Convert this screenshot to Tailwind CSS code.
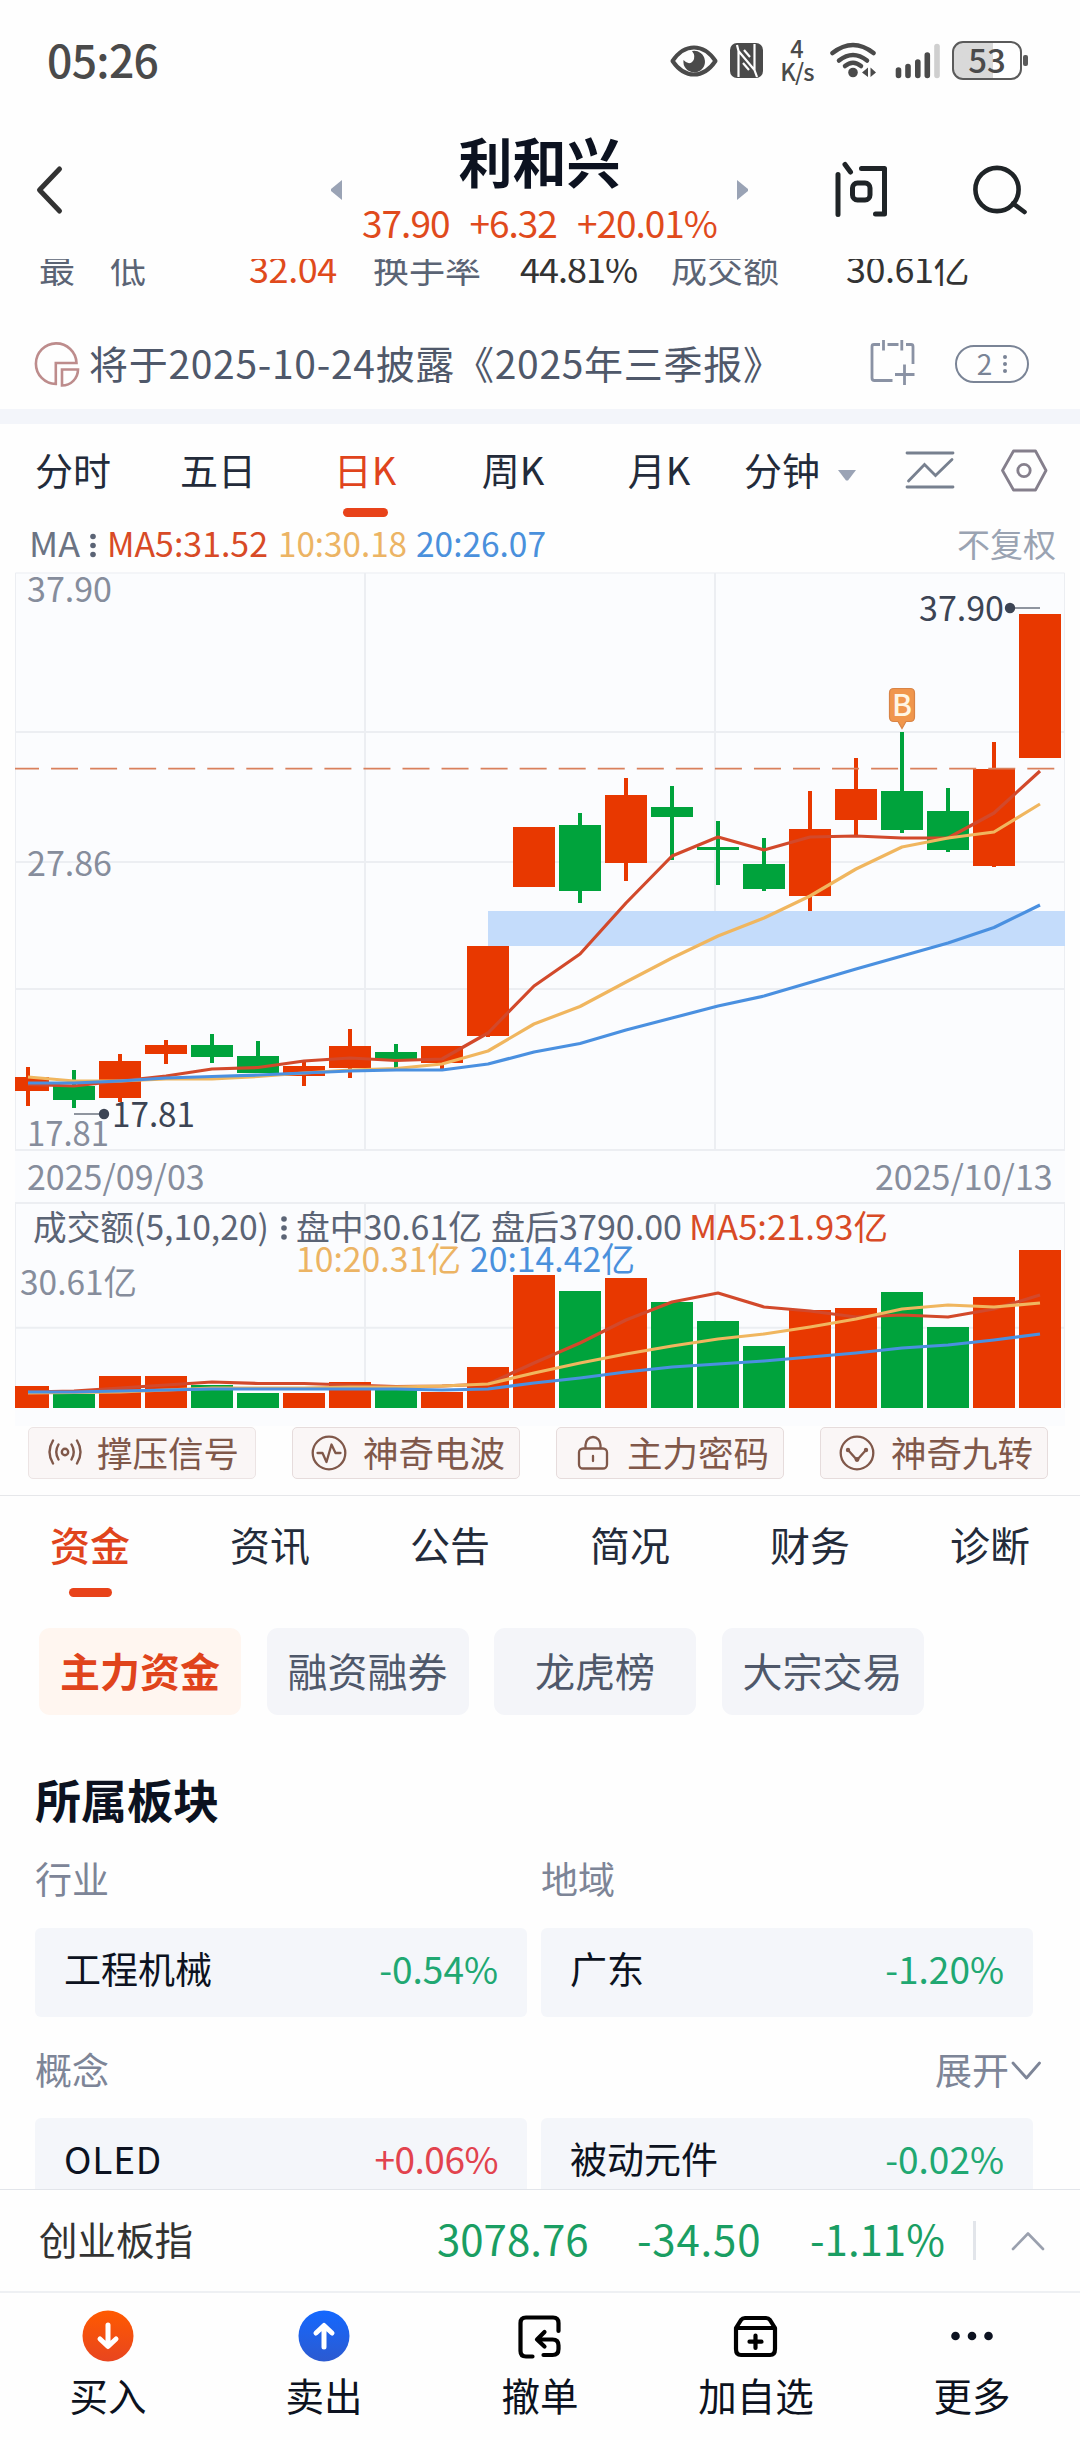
<!DOCTYPE html>
<html lang="zh-CN">
<head>
  <meta charset="UTF-8">
  <meta name="viewport" content="width=device-width, initial-scale=1.0">
  <title>利和兴 37.90 +20.01%</title>
  <script src="https://cdn.jsdelivr.net/npm/@tailwindcss/browser@4"></script>
</head>
<body class="w-[1080px] h-[2440px] overflow-hidden flex flex-col bg-[#fefefe] text-[#232b3a] font-['Noto_Sans_CJK_SC','Roboto',sans-serif]">

  <!-- Status bar -->
  <div class="h-[100px] shrink-0 flex items-start text-[#4a4a4a]">
    <span class="ml-[47px] mt-[29px] w-[623px] text-[44.500px] leading-[60px] font-medium tracking-[-0.700px]">05:26</span>
    <svg class="mt-[42px]" width="48" height="38" viewBox="670 42 48 38" fill="none">
      <path d="M672.500 61 C680 50 687 47.500 694 47.500 C701 47.500 708 50 715.500 61 C708 72 701 74.500 694 74.500 C687 74.500 680 72 672.500 61 Z" stroke="#4a4a4a" stroke-width="4" stroke-linejoin="round"/>
      <path d="M692 51 A10.800 10.800 0 1 1 683.500 60 Q689 66 693 61 Q696 56 692 51 Z" fill="#4a4a4a"/>
    </svg>
    <svg class="ml-[12px] mt-[43px]" width="33" height="35" viewBox="0 0 33 35">
      <rect width="33" height="35" rx="7" fill="#4a4a4a"/>
      <path d="M8.500 34 V8 L24.500 27 M8.500 8 L7 2 M24.500 1 V27 L27 34 M13 20 L19 27 M14 7 L20 14" fill="none" stroke="#fefefe" stroke-width="2.200"/>
    </svg>
    <div class="ml-[12px] mt-[37px] w-[44px] flex flex-col items-center text-[23.500px] leading-[23px] font-medium">
      <span>4</span>
      <span class="tracking-[-0.800px]">K/s</span>
    </div>
    <svg class="ml-[10px] mt-[40px]" width="48" height="40" viewBox="828 41 48 40" fill="none" stroke="#4a4a4a" stroke-width="4.500" stroke-linecap="round">
      <path d="M831.500 54 Q852 38 872.500 54"/>
      <path d="M838 61.500 Q852 50.500 866 61.500"/>
      <path d="M844 67 Q852 60.500 860 67"/>
      <circle cx="852" cy="73.500" r="4.800" fill="#4a4a4a" stroke="none"/>
      <path d="M867 68.500 V78 L861 73.500 Z M869.500 68.500 V78 L875 73.500 Z" fill="#4a4a4a" stroke="none"/>
    </svg>
    <svg class="ml-[18px] mt-[42px]" width="46" height="37" viewBox="894 42 46 37" stroke="#4a4a4a" stroke-width="5.600" stroke-linecap="round">
      <path d="M897.500 70 V75.500 M907 66.500 V75.500 M916.800 62 V75.500 M926.300 55 V75.500"/>
      <path d="M936 46.500 V75.500" stroke="#cfcfcf"/>
    </svg>
    <div class="relative ml-[11px] mt-[41px] w-[70px] h-[39px] rounded-[11px] border-[2.500px] border-[#5a5a5a] bg-linear-to-r from-[#d9d9d9] from-59% to-[#fefefe] to-59% flex items-center justify-center">
      <span class="text-[33px] leading-[34px] font-medium -mt-[4px]">53</span>
      <span class="absolute -right-[8px] top-[12px] w-[5px] h-[11px] rounded-[2px] bg-[#5a5a5a]"></span>
    </div>
  </div>

  <!-- Header -->
  <header class="h-[158px] shrink-0 pt-[22px] pl-[35px] flex items-center">
    <svg width="30" height="50" viewBox="0 0 30 50" fill="none" stroke="#333" stroke-width="5" stroke-linecap="round" stroke-linejoin="round">
      <path d="M24.500 4 L4.500 25 L24.500 46"/>
    </svg>
    <svg class="ml-[266px]" width="11" height="20" viewBox="0 0 11 20"><path d="M11 0 V20 L0 11 V9 Z" fill="#9aa3b5"/></svg>
    <div class="w-[395px] self-start mt-[12px] flex flex-col items-center">
      <h1 class="text-[54px] leading-[54px] font-bold text-[#0c1220]">利和兴</h1>
      <div class="mt-[14px] flex gap-[20px] text-[37px] leading-[40px] tracking-[-1px] text-[#e04a1c]">
        <span>37.90</span><span>+6.32</span><span>+20.01%</span>
      </div>
    </div>
    <svg width="11" height="20" viewBox="0 0 11 20"><path d="M0 0 V20 L11 11 V9 Z" fill="#9aa3b5"/></svg>
    <svg class="ml-[85px]" width="56" height="60" viewBox="833 160 56 60" fill="none" stroke="#1f2427" stroke-width="5" stroke-linecap="round" stroke-linejoin="round">
      <path d="M838 174.500 V214.500 M845 164.500 L850.500 172 M861.500 168.500 H884.500 V214 H875.500"/>
      <rect x="852.500" y="183" width="17.500" height="17" rx="5"/>
    </svg>
    <svg class="ml-[82px]" width="60" height="60" viewBox="971 160 60 60" fill="none" stroke="#1f2427" stroke-width="4.600" stroke-linecap="round">
      <circle cx="997" cy="189.500" r="21.600"/>
      <path d="M1013 203.500 L1024.500 212"/>
    </svg>
  </header>

  <!-- Quote row, scrolled under the header -->
  <div class="h-[57px] mt-px shrink-0 overflow-hidden">
    <div class="-mt-[18px] flex text-[36px] leading-[52px] text-[#5b6475]">
      <span class="ml-[39px] w-[210px] whitespace-pre tracking-[-0.100px]">最<span class="inline-block w-[35px]"></span>低</span>
      <span class="w-[124px] text-[#e04a1c] tracking-[-0.400px]">32.04</span>
      <span class="w-[147px]">换手率</span>
      <span class="w-[151px] text-[#333] tracking-[-1px]">44.81%</span>
      <span class="w-[175px]">成交额</span>
      <span class="text-[#333] tracking-[-0.500px]">30.61亿</span>
    </div>
  </div>

  <!-- Report notice -->
  <div class="h-[93px] shrink-0 pl-[34px] flex items-center">
    <svg class="mt-1" width="46" height="48" viewBox="34 341 46 48" fill="none" stroke="#bd8c8c" stroke-width="2.600">
      <path d="M55.800 384 A20.300 20.300 0 1 1 76.500 363 H55.800 Z"/>
      <path d="M62 369.500 H78 A16 16 0 0 1 62 385.500 Z"/>
    </svg>
    <span class="ml-[9px] w-[780px] text-[39px] leading-[50px] tracking-[0.700px] -mt-[2px] text-[#4f586a]">将于2025-10-24披露《2025年三季报》</span>
    <svg class="mt-[3px]" width="48" height="50" viewBox="869 340 48 50" fill="none" stroke="#8a92a4" stroke-width="2.800">
      <path d="M880 345.500 H874 Q872 345.500 872 347.500 V379 Q872 381.500 874.500 381.500 H892.500 M887.500 345.500 H898.500 M906 345.500 H911 Q913 345.500 913 347.500 V365 M883.500 341 V351.500 M901.800 341 V351.500 M904.500 365.500 V386 M895 375.500 H914.500"/>
    </svg>
    <div class="ml-[38px] mt-[2px] w-[74px] h-[38px] rounded-full border-[2.500px] border-[#7a8496] flex items-center justify-center gap-[11px] text-[#7a8496]">
      <span class="text-[28px] leading-[30px] -mt-[2px]">2</span>
      <span class="flex flex-col gap-[3px]">
        <i class="size-[4px] rounded-full bg-[#7a8496]"></i><i class="size-[4px] rounded-full bg-[#7a8496]"></i><i class="size-[4px] rounded-full bg-[#7a8496]"></i>
      </span>
    </div>
  </div>

  <div class="h-[15px] shrink-0 bg-[#f3f5fa]"></div>

  <!-- Period tabs -->
  <nav class="h-[98px] shrink-0 pt-[20px] flex items-start text-[38px] leading-[50px]">
    <span class="w-[146px] text-center">分时</span>
    <span class="w-[144px] text-center">五日</span>
    <span class="w-[150px] flex flex-col items-center text-[#e0441c]">日K<i class="mt-[14px] w-[45px] h-[9px] rounded-full bg-[#e8431a]"></i></span>
    <span class="w-[146px] text-center">周K</span>
    <span class="w-[146px] text-center">月K</span>
    <span class="ml-[12px]">分钟</span>
    <svg class="ml-[17px] mt-[25px]" width="20" height="13" viewBox="0 0 20 13"><path d="M1 1 H19 L11 11.500 H9 Z" fill="#9aa3b5"/></svg>
    <svg class="ml-[48px] mt-[6px]" width="50" height="40" viewBox="906 450 50 40" fill="none" stroke="#77808f" stroke-width="2.800" stroke-linecap="round">
      <path d="M908 453 H954 M908 487 H954 M909.500 481 L925.500 464.500 L936.500 475.500 L953 459.500"/>
    </svg>
    <svg class="ml-[45px] mt-[4px]" width="50" height="46" viewBox="1000 448 50 46" fill="none" stroke="#857f8c" stroke-width="2.800" stroke-linejoin="round">
      <path d="M1013.500 451 H1035.500 L1046 470.500 L1035.500 490 H1013.500 L1002.500 470.500 Z"/>
      <circle cx="1024" cy="470.500" r="6.200"/>
    </svg>
  </nav>

  <!-- K line + turnover charts -->
  <svg class="shrink-0" width="1080" height="904" viewBox="0 522 1080 904" font-size="34">
    <g>
      <text x="29" y="557" fill="#6b7383" textLength="51" lengthAdjust="spacingAndGlyphs">MA</text>
      <g fill="#5b6475"><circle cx="93" cy="536.500" r="2.800"/><circle cx="93" cy="545.500" r="2.800"/><circle cx="93" cy="554.500" r="2.800"/></g>
      <text x="107" y="557" fill="#d84a26" textLength="161" lengthAdjust="spacingAndGlyphs">MA5:31.52</text>
      <text x="278" y="557" fill="#ecb464" textLength="129" lengthAdjust="spacingAndGlyphs">10:30.18</text>
      <text x="416" y="557" fill="#4a90dc" textLength="130" lengthAdjust="spacingAndGlyphs">20:26.07</text>
      <text x="957" y="557" font-size="33" fill="#9aa3b2">不复权</text>
    </g>

    <rect x="15" y="572" width="1050" height="854" fill="#fbfcfe"/>
    <g fill="none" stroke="#eceef2" stroke-width="2">
      <path d="M15.500 1150 V573 H1064.500 V1150" stroke-width="1"/>
      <path d="M15 732 H1065 M15 862 H1065 M15 989 H1065 M15 1150 H1065 M365 573 V1150 M715 573 V1150"/>
      <path d="M15.500 1408 V1203 M1064.500 1408 V1203" stroke-width="1"/>
      <path d="M15 1203 H1065 M15 1327.700 H1065 M365 1203 V1408 M715 1203 V1408"/>
    </g>
    <rect x="488" y="911" width="577" height="35" fill="#c4dcfb"/>

    <g fill="#868d9c">
      <text x="27" y="601.500" textLength="85" lengthAdjust="spacingAndGlyphs">37.90</text>
      <text x="27" y="876" textLength="85" lengthAdjust="spacingAndGlyphs">27.86</text>
      <text x="27" y="1146" textLength="82" lengthAdjust="spacingAndGlyphs">17.81</text>
      <text x="27" y="1190">2025/09/03</text>
      <text x="875" y="1190">2025/10/13</text>
      <text x="20" y="1295" textLength="117" lengthAdjust="spacingAndGlyphs">30.61亿</text>
    </g>

    <g id="candles"></g>
    <path d="M12 768.700 H1055" stroke="#d9805c" stroke-width="1.800" stroke-dasharray="27 12.050" clip-path="url(#plot)"/>
    <clipPath id="plot"><rect x="15" y="572" width="1050" height="854"/></clipPath>
    <g id="lines" fill="none" stroke-width="3.200" stroke-linejoin="round"></g>

    <!-- High / low callouts -->
    <g fill="#3c4454">
      <path d="M1010 608 H1040 M74 1114 H104" stroke="#8f959f" stroke-width="1.800"/>
      <circle cx="1010" cy="608" r="5.200"/>
      <circle cx="104" cy="1114" r="5.200"/>
      <text x="919" y="621" textLength="85" lengthAdjust="spacingAndGlyphs">37.90</text>
      <text x="112" y="1127" textLength="83" lengthAdjust="spacingAndGlyphs">17.81</text>
    </g>

    <!-- Buy marker -->
    <path d="M894 688.500 H910 Q914.500 688.500 914.500 693 V717 Q914.500 721.500 910 721.500 H906 L902 728.500 L898 721.500 H894 Q889.500 721.500 889.500 717 V693 Q889.500 688.500 894 688.500 Z" fill="#f0964c" stroke="#d98446" stroke-width="1.200"/>
    <text x="902" y="716" text-anchor="middle" font-size="30" font-weight="500" fill="#fff6e4">B</text>

    <g fill="#5b6475">
      <text x="33" y="1240" textLength="236" lengthAdjust="spacingAndGlyphs">成交额(5,10,20)</text>
      <circle cx="284" cy="1219" r="2.800"/><circle cx="284" cy="1228" r="2.800"/><circle cx="284" cy="1237" r="2.800"/>
      <text x="296" y="1240" textLength="186" lengthAdjust="spacingAndGlyphs">盘中30.61亿</text>
      <text x="491" y="1240" textLength="191" lengthAdjust="spacingAndGlyphs">盘后3790.00</text>
      <text x="689" y="1240" fill="#d84a26" textLength="199" lengthAdjust="spacingAndGlyphs">MA5:21.93亿</text>
      <text x="296" y="1272" fill="#ecb464" textLength="165" lengthAdjust="spacingAndGlyphs">10:20.31亿</text>
      <text x="470" y="1272" fill="#4a90dc" textLength="165" lengthAdjust="spacingAndGlyphs">20:14.42亿</text>
    </g>
  </svg>

  <!-- Signal buttons -->
  <div class="h-[69px] shrink-0 pt-px pl-[28px] flex gap-[36px] text-[35.500px] leading-[44px] text-[#80584a]">
    <div class="w-[228px] h-[52px] rounded-[5px] border-[1.500px] border-[#ece4e4] bg-[#faf6f6] flex items-center pl-[18px]">
      <svg width="36" height="34" viewBox="0 0 36 34" fill="none" stroke="#80584a" stroke-width="2.400" stroke-linecap="round">
        <circle cx="18" cy="16" r="3.200"/>
        <path d="M11.500 8.500 Q7 16 11.500 23.500 M24.500 8.500 Q29 16 24.500 23.500 M6 4.500 Q-1 16 6 27.500 M30 4.500 Q37 16 30 27.500"/>
      </svg>
      <span class="ml-[14px] -mt-[2px]">撑压信号</span>
    </div>
    <div class="w-[228px] h-[52px] rounded-[5px] border-[1.500px] border-[#e6dcdc] bg-[#faf6f6] flex items-center pl-[18px]">
      <svg width="36" height="36" viewBox="0 0 36 36" fill="none" stroke="#80584a" stroke-width="2.300" stroke-linecap="round" stroke-linejoin="round">
        <circle cx="18" cy="18" r="16.300"/>
        <path d="M6.500 18 H11.500 L15.500 27 L20.500 9.500 L24.500 18 H29.500"/>
      </svg>
      <span class="ml-[16px] -mt-[2px]">神奇电波</span>
    </div>
    <div class="w-[228px] h-[52px] rounded-[5px] border-[1.500px] border-[#e6dcdc] bg-[#faf6f6] flex items-center pl-[18px]">
      <svg width="36" height="36" viewBox="0 0 36 36" fill="none" stroke="#80584a" stroke-width="2.300" stroke-linecap="round">
        <rect x="4" y="13.500" width="28" height="20" rx="4"/>
        <path d="M10.500 13 V10 A7.500 8 0 0 1 25.500 10 V13 M18 21 V26"/>
      </svg>
      <span class="ml-[16px] -mt-[2px]">主力密码</span>
    </div>
    <div class="w-[228px] h-[52px] rounded-[5px] border-[1.500px] border-[#e6dcdc] bg-[#faf6f6] flex items-center pl-[18px]">
      <svg width="36" height="36" viewBox="0 0 36 36" fill="none" stroke="#80584a" stroke-width="2.300">
        <circle cx="18" cy="18" r="16.300"/>
        <path d="M9 15 L18 25 L27 15"/>
        <g fill="#80584a" stroke="none"><circle cx="9" cy="15" r="2.200"/><circle cx="18" cy="24.500" r="2.400"/><circle cx="27" cy="15" r="2.200"/></g>
      </svg>
      <span class="ml-[16px] -mt-[2px]">神奇九转</span>
    </div>
  </div>

  <!-- Section tabs -->
  <nav class="h-[133px] shrink-0 border-t border-[#e6e7ea] pt-[23px] grid grid-cols-6 text-center text-[40px] leading-[50px]">
    <span class="flex flex-col items-center font-medium text-[#e0441c]">资金<i class="mt-[19px] w-[43px] h-[9px] rounded-full bg-[#e8431a]"></i></span>
    <span>资讯</span>
    <span>公告</span>
    <span>简况</span>
    <span>财务</span>
    <span>诊断</span>
  </nav>

  <div class="h-[87px] shrink-0 pl-[39px] flex gap-[25.500px] text-[40px] leading-[84px] text-center text-[#4f586a]">
    <span class="w-[202px] rounded-[11px] bg-[#fff6f0] font-bold text-[#e0441c]">主力资金</span>
    <span class="w-[202px] rounded-[11px] bg-[#f4f5f9]">融资融券</span>
    <span class="w-[202px] rounded-[11px] bg-[#f4f5f9]">龙虎榜</span>
    <span class="w-[202px] rounded-[11px] bg-[#f4f5f9]">大宗交易</span>
  </div>

  <!-- Sectors; the last row is cut off by the index bar -->
  <main class="h-[474px] shrink-0 overflow-hidden px-[35px] pt-[58px]">
    <h2 class="text-[46px] leading-[50px] font-bold text-[#0c1220]">所属板块</h2>
    <div class="mt-[30px] flex text-[37px] leading-[50px] text-[#7d8597]">
      <span class="w-[506px]">行业</span><span>地域</span>
    </div>
    <div class="mt-[25px] w-[998px] grid grid-cols-2 gap-[14px] text-[37px] leading-[80px] text-[#0c1220]">
      <div class="h-[89px] rounded-[6px] bg-[#f4f6fa] px-[29px] flex justify-between"><span>工程机械</span><span class="text-[#20a872]">-0.54%</span></div>
      <div class="h-[89px] rounded-[6px] bg-[#f4f6fa] px-[29px] flex justify-between"><span>广东</span><span class="text-[#20a872]">-1.20%</span></div>
    </div>
    <div class="mt-[27px] flex items-center text-[37px] leading-[50px] text-[#7d8597]">
      <span class="w-[900px]">概念</span><span>展开</span>
      <svg class="ml-[2px] mt-[4px]" width="30" height="20" viewBox="0 0 30 20" fill="none" stroke="#7d8597" stroke-width="2.800" stroke-linecap="round" stroke-linejoin="round"><path d="M2 2 L15.500 17 L28.500 2"/></svg>
    </div>
    <div class="mt-[24px] w-[998px] grid grid-cols-2 gap-[14px] text-[37px] leading-[80px] text-[#0c1220]">
      <div class="h-[89px] rounded-[6px] bg-[#f4f6fa] px-[29px] flex justify-between"><span class="tracking-[0.800px]">OLED</span><span class="text-[#e2434e] tracking-[-0.500px]">+0.06%</span></div>
      <div class="h-[89px] rounded-[6px] bg-[#f4f6fa] px-[29px] flex justify-between"><span>被动元件</span><span class="text-[#20a872]">-0.02%</span></div>
    </div>
  </main>

  <!-- Index bar -->
  <div class="h-[102px] shrink-0 border-t border-[#e2e5ea] pl-[39px] flex items-center text-[42px] leading-[50px] text-[#1a9e63]">
    <span class="w-[398px] text-[38.500px] text-[#333] -mt-[5px]">创业板指</span>
    <span class="w-[200px] -mt-[6px]">3078.76</span>
    <span class="w-[173px] -mt-[6px] tracking-[0.800px]">-34.50</span>
    <span class="w-[163px] -mt-[6px]">-1.11%</span>
    <span class="w-[3px] h-[39px] bg-[#e2e5ea]"></span>
    <svg class="ml-[35px]" width="34" height="20" viewBox="0 0 34 20" fill="none" stroke="#9aa0ae" stroke-width="2.600" stroke-linecap="round" stroke-linejoin="round"><path d="M2 18 L17 2.500 L32 18"/></svg>
  </div>

  <!-- Bottom actions -->
  <footer class="h-[149px] shrink-0 border-t-2 border-[#eef0f3] pt-[16px] grid grid-cols-5 text-[38.500px] leading-[50px] text-[#0c1220]">
    <div class="flex flex-col items-center">
      <svg width="52" height="54" viewBox="-26 -27 52 54" fill="none" stroke="#fff" stroke-width="5" stroke-linecap="round" stroke-linejoin="round">
        <defs><linearGradient id="buy" x1="0" y1="0" x2="0" y2="1"><stop stop-color="#ff5a00"/><stop offset="1" stop-color="#e8451f"/></linearGradient></defs>
        <circle r="25.500" fill="url(#buy)" stroke="none"/>
        <path d="M0 -11 V10 M-8 3 L0 10.500 L8 3"/>
      </svg>
      <span class="mt-[6px]">买入</span>
    </div>
    <div class="flex flex-col items-center">
      <svg width="52" height="54" viewBox="-26 -27 52 54" fill="none" stroke="#fff" stroke-width="5" stroke-linecap="round" stroke-linejoin="round">
        <defs><linearGradient id="sell" x1="0" y1="0" x2="0" y2="1"><stop stop-color="#1468ff"/><stop offset="1" stop-color="#2c5ad0"/></linearGradient></defs>
        <circle r="25.500" fill="url(#sell)" stroke="none"/>
        <path d="M0 11 V-10 M-8 -3 L0 -10.500 L8 -3"/>
      </svg>
      <span class="mt-[6px]">卖出</span>
    </div>
    <div class="flex flex-col items-center">
      <svg width="52" height="54" viewBox="514 2308 52 54" fill="none" stroke="#000" stroke-width="4.200" stroke-linecap="round" stroke-linejoin="round">
        <path d="M532.500 2355.500 H526 Q520.500 2355.500 520.500 2350 V2322 Q520.500 2316.500 526 2316.500 H553 Q558.500 2316.500 558.500 2322 V2330"/>
        <path d="M543.500 2354 H552.500 Q558.500 2354 558.500 2348 V2344.500 Q558.500 2338.500 552.500 2338.500 H537 M544.500 2331 L537 2338.500 L544.500 2345.500"/>
      </svg>
      <span class="mt-[6px]">撤单</span>
    </div>
    <div class="flex flex-col items-center">
      <svg width="52" height="54" viewBox="730 2308 52 54" fill="none" stroke="#000" stroke-width="4.200" stroke-linecap="round" stroke-linejoin="round">
        <path d="M736 2327 V2348 Q736 2354 741 2354 H770 Q775 2354 775 2348 V2327 L770 2319 Q768.500 2317 766 2317 H745 Q742.500 2317 741 2319 Z M736 2327 H775 M755.500 2334.500 V2347 M749.500 2340.700 H761.500"/>
      </svg>
      <span class="mt-[6px]">加自选</span>
    </div>
    <div class="flex flex-col items-center">
      <svg width="52" height="54" viewBox="-26 -27 52 54" fill="#0c1220"><circle cx="-16.500" r="4.300"/><circle r="4.300"/><circle cx="16.500" r="4.300"/></svg>
      <span class="mt-[6px]">更多</span>
    </div>
  </footer>

  <script>
    const RED = '#e83800', GREEN = '#00a33c';
    const X0 = 28, STEP = 46, HALF = 21;

    // [up, body top, body bottom, wick top, wick bottom, turnover bar top]
    const days = [
      [1, 1077, 1091, 1067, 1106, 1386],
      [0, 1086, 1100, 1070, 1108, 1394],
      [1, 1061, 1098, 1054, 1102, 1376],
      [1, 1045, 1054, 1040, 1064, 1376],
      [0, 1045, 1057, 1034, 1063, 1385],
      [0, 1056, 1073, 1041, 1073, 1393],
      [1, 1066, 1076, 1060, 1086, 1393],
      [1, 1046, 1068, 1029, 1078, 1382],
      [0, 1052, 1060, 1044, 1068, 1390],
      [1, 1046, 1063, 1046, 1069, 1392],
      [1, 946, 1036, 946, 1037, 1367],
      [1, 827, 887, 827, 887, 1275],
      [0, 825, 891, 813, 903, 1291],
      [1, 795, 863, 778, 881, 1278],
      [0, 807, 817, 786, 860, 1302],
      [0, 847, 850, 821, 885, 1321],
      [0, 864, 889, 838, 891, 1346],
      [1, 829, 896, 791, 911, 1310],
      [1, 789, 820, 758, 836, 1308],
      [0, 791, 830, 732, 833, 1292],
      [0, 811, 850, 788, 852, 1327],
      [1, 769, 866, 742, 867, 1297],
      [1, 614, 758, 614, 758, 1250]
    ];

    const averages = [
      ['#d2492b', [1084.5, 1086, 1081, 1076, 1069, 1067.5, 1061, 1058, 1060.5, 1059, 1033, 986, 954, 903, 856, 837, 850, 837, 836, 838, 838, 813, 771]],
      ['#f0b65f', [1077, 1081, 1081, 1079, 1079, 1076.5, 1073, 1070, 1068.5, 1064, 1051, 1024, 1006.5, 982, 958, 936, 918, 896, 869, 847, 838, 832, 804]],
      ['#4a90e0', [1083, 1083, 1081, 1078, 1076.5, 1075, 1073, 1071, 1070, 1070, 1064, 1052, 1043.5, 1030, 1018, 1006, 996, 982.5, 969, 956, 943, 927.5, 905]],
      ['#d2492b', [1392, 1391, 1388, 1385, 1382, 1383.5, 1383.5, 1385, 1386.5, 1386, 1384, 1363, 1343, 1320, 1302, 1293, 1307, 1311, 1317, 1315, 1317, 1309, 1295]],
      ['#f0b65f', [1393, 1392.5, 1392, 1390, 1388, 1388, 1388, 1387, 1387, 1386, 1384, 1373, 1363, 1354, 1346, 1339, 1334, 1327, 1319, 1309, 1305, 1307, 1303]],
      ['#4a90e0', [1392, 1392, 1391, 1390, 1389, 1389, 1389, 1389, 1389, 1390, 1389, 1383, 1378, 1372, 1367, 1364, 1361, 1357, 1353, 1348, 1345, 1340, 1334]]
    ];

    // Candles and turnover bars; the first one is cut by the plot's left edge
    document.getElementById('candles').innerHTML = days.map(([up, top, bottom, high, low, vol], i) => {
      const x = X0 + i * STEP;
      const left = Math.max(15, x - HALF);
      const w = x + HALF - left;
      return `<g fill="${up ? RED : GREEN}">
        <rect x="${x - 2}" y="${high}" width="4" height="${low - high}"/>
        <rect x="${left}" y="${top}" width="${w}" height="${bottom - top}"/>
        <rect x="${left}" y="${vol}" width="${w}" height="${1408 - vol}"/>
      </g>`;
    }).join('');

    document.getElementById('lines').innerHTML = averages.map(([color, ys]) =>
      `<polyline stroke="${color}" points="${ys.map((y, i) => `${X0 + i * STEP},${y}`).join(' ')}"/>`
    ).join('');
  </script>
</body>
</html>
